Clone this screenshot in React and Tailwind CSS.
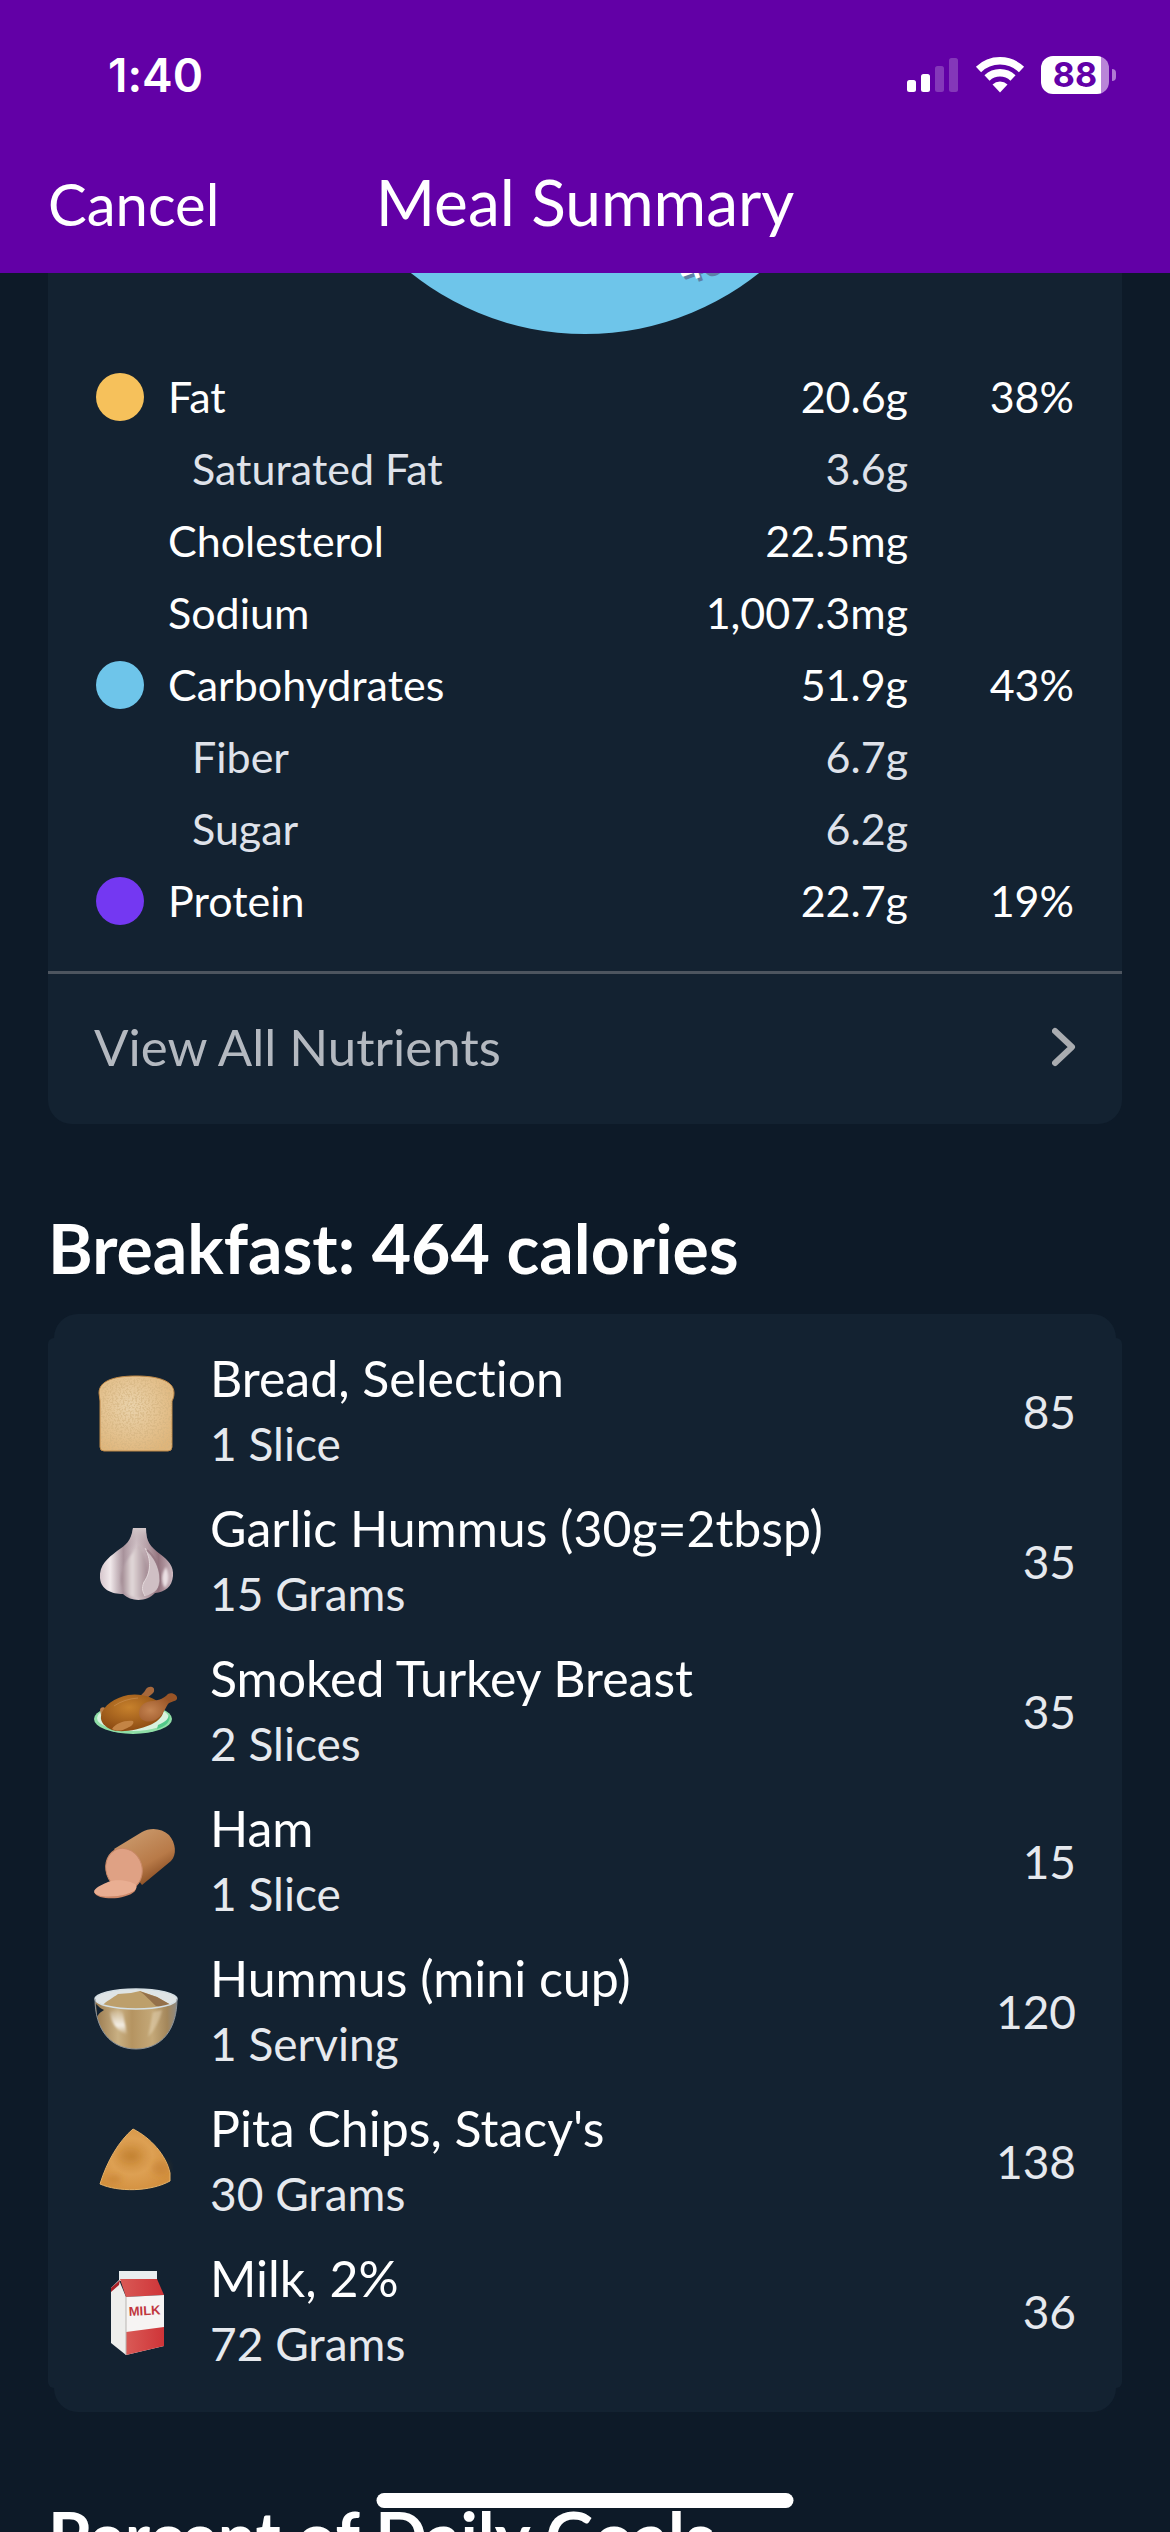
const nutrients = [
  { name: 'Fat', amount: '20.6g', percent: '38%', dot: 'bg-[#f6c15b]' },
  { name: 'Saturated Fat', amount: '3.6g', sub: true },
  { name: 'Cholesterol', amount: '22.5mg' },
  { name: 'Sodium', amount: '1,007.3mg' },
  { name: 'Carbohydrates', amount: '51.9g', percent: '43%', dot: 'bg-[#6ec5ea]' },
  { name: 'Fiber', amount: '6.7g', sub: true },
  { name: 'Sugar', amount: '6.2g', sub: true },
  { name: 'Protein', amount: '22.7g', percent: '19%', dot: 'bg-[#7438f2]' },
];

function BreadIcon() {
  return (
    <svg viewBox="0 0 84 84" className="size-[84px]" aria-hidden="true">
      <defs>
        <radialGradient id="bread" cx="0.42" cy="0.4" r="0.7">
          <stop offset="0" stopColor="#ead3ac" />
          <stop offset="1" stopColor="#dfb57a" />
        </radialGradient>
        <filter id="crumb" x="0" y="0" width="1" height="1">
          <feTurbulence type="fractalNoise" baseFrequency="0.55" numOctaves="2" seed="4" />
          <feColorMatrix values="0 0 0 0 0.66  0 0 0 0 0.46  0 0 0 0 0.22  0 0 0 5 -2.2" />
          <feComposite in2="SourceGraphic" operator="in" />
        </filter>
      </defs>
      <path d="M5 22C5 9 22 5 42 5S80 9 80 22c0 4-1 6-2 8v46q0 4-4 4H10q-4 0-4-4V30c0-3-1-5-1-8z" fill="url(#bread)" stroke="#bd8848" strokeWidth="1" />
      <path d="M7 22C7 10 22 7 42 7S78 10 78 22v54q0 3-4 3H10q-3 0-3-3z" filter="url(#crumb)" opacity="0.6" />
    </svg>
  );
}

function GarlicIcon() {
  return (
    <svg viewBox="0 -2 84 84" className="size-[84px]" aria-hidden="true">
      <defs>
        <linearGradient id="garlic">
          <stop offset="0" stopColor="#d6c6cc" />
          <stop offset="0.14" stopColor="#f1e9eb" />
          <stop offset="0.32" stopColor="#a8929b" />
          <stop offset="0.5" stopColor="#d8cbcf" />
          <stop offset="0.8" stopColor="#94747f" />
          <stop offset="1" stopColor="#cdbac1" />
        </linearGradient>
        <linearGradient id="clove">
          <stop offset="0" stopColor="#9d858e" />
          <stop offset="0.4" stopColor="#e3dada" />
          <stop offset="1" stopColor="#a08790" />
        </linearGradient>
        <linearGradient id="neck" x2="0" y2="1">
          <stop offset="0" stopColor="#d3c8ca" />
          <stop offset="1" stopColor="#a68d97" stopOpacity="0" />
        </linearGradient>
        <filter id="garlicSoft"><feGaussianBlur stdDeviation="1" /></filter>
      </defs>
      <path d="M39 5h13c0 14 4 18 14 26 8 6 14 12 13 22-1 11-8 16-18 17-8 9-24 9-32 1C18 71 7 67 6 55 5 42 14 35 23 28c9-6 14-10 16-23z" fill="url(#garlic)" />
      <path d="M45 22c-8 10-18 21-18 34 0 8 3 14 9 17 6 2 12 2 15 0 3-12 5-22 2-32-2-8-4-14-8-19z" fill="url(#clove)" filter="url(#garlicSoft)" />
      <path d="M51 25c8 15 4 27-1 34-3 7-1 10 1 14 8-2 14-6 15-15 0-13-6-24-15-33z" fill="#cfbfc4" />
      <path d="M51 25c8 15 4 27-1 34-3 7-1 10 1 14" fill="none" stroke="#e4d9db" strokeWidth="1" />
      <path d="M53 27c13 12 16 28 11 41" fill="none" stroke="#937580" strokeWidth="2" opacity="0.7" />
      <path d="M72 44c4 8 3 16-1 21-4-6-4-14 1-21z" fill="#eadfe3" filter="url(#garlicSoft)" />
      <path d="M39 5h13c0 12 3 16 8 22H28c7-5 10-12 11-22z" fill="url(#neck)" />
    </svg>
  );
}

function TurkeyIcon() {
  return (
    <svg viewBox="0 2 84 84" className="size-[84px]" aria-hidden="true">
      <defs>
        <radialGradient id="turkey" cx="0.45" cy="0.35" r="0.65">
          <stop offset="0" stopColor="#c7812c" />
          <stop offset="1" stopColor="#8c4b13" />
        </radialGradient>
        <radialGradient id="thigh" cx="0.3" cy="0.6" r="0.6">
          <stop offset="0" stopColor="#c48350" />
          <stop offset="1" stopColor="#985426" />
        </radialGradient>
      </defs>
      <ellipse cx="39" cy="50" rx="39" ry="15" fill="#8fdfa7" />
      <ellipse cx="39" cy="49" rx="36" ry="13" fill="#d8f2df" />
      <path d="M64 56c8-3 11-7 11-11 3 7-4 13-12 15z" fill="#52c98a" />
      <path d="M40 29c6-1 10-5 12-9 3-4 9-2 8 1 1 3-4 5-7 8l-6 7z" fill="#a6683c" />
      <path d="M6 41c0-3 4-4 6-1l1 7-6-1z" fill="#b97d49" />
      <path d="M7 47c2-11 14-18 27-21 13-2 26 2 34 10 5 7-2 16-12 20-12 5-28 8-38 5-7-3-12-8-11-14z" fill="url(#turkey)" />
      <path d="M45 44c0-8 7-12 14-12 7-1 11-3 15-7 4-2 10 1 9 5-2 3-6 2-9 5-4 7-7 14-15 17-7 2-14-1-14-8z" fill="url(#thigh)" />
      <path d="M18 60c4-6 13-9 21-8 2 3-3 6-8 8-4 2-9 2-13 0z" fill="#c38445" />
      <path d="M20 37q10-7 24-8" fill="none" stroke="#d39a5d" strokeWidth="1" opacity="0.5" />
    </svg>
  );
}

function HamIcon() {
  return (
    <svg viewBox="0 0 84 84" className="size-[84px]" aria-hidden="true">
      <defs>
        <linearGradient id="ham" x1="0.3" y1="0.1" x2="0.8" y2="0.9">
          <stop offset="0" stopColor="#c89668" />
          <stop offset="0.6" stopColor="#b87a48" />
          <stop offset="1" stopColor="#83481f" />
        </linearGradient>
      </defs>
      <path d="M20 28L48 11C56 6 68 7 75 14c7 8 8 20 2 26L48 64z" fill="url(#ham)" />
      <ellipse cx="30" cy="48" rx="18" ry="21" transform="rotate(-18 30 48)" fill="#dfa184" stroke="#c98967" strokeWidth="1" />
      <path d="M0 71c2 6 14 7 24 6 10-2 18-5 18-10z" fill="#cd8868" />
      <path d="M0 70c3-5 10-7 14-9 7-3 22-2 28 3 3 5-6 9-18 11-11 1-23 1-24-5z" fill="#e9ae92" />
    </svg>
  );
}

function BowlIcon() {
  return (
    <svg viewBox="0 -8 84 84" className="size-[84px]" aria-hidden="true">
      <defs>
        <linearGradient id="bowl">
          <stop offset="0" stopColor="#98784d" />
          <stop offset="0.28" stopColor="#c9b083" />
          <stop offset="0.45" stopColor="#b59461" />
          <stop offset="0.7" stopColor="#c4a878" />
          <stop offset="0.88" stopColor="#a3865a" />
          <stop offset="1" stopColor="#8d8a84" />
        </linearGradient>
        <linearGradient id="shine" x2="0" y2="1">
          <stop offset="0" stopColor="#fff" stopOpacity="0.1" />
          <stop offset="0.6" stopColor="#fff" stopOpacity="0.8" />
          <stop offset="1" stopColor="#fff" stopOpacity="0" />
        </linearGradient>
        <filter id="bowlSoft"><feGaussianBlur stdDeviation="1.2" /></filter>
      </defs>
      <path d="M1 20c0 30 15 50 41 50s41-20 41-50c-5 12-77 12-82 0z" fill="url(#bowl)" />
      <ellipse cx="42" cy="20" rx="41" ry="10" fill="#dfe4e5" />
      <path d="M8 27c4-5 11-8 16-12l13-1 9-2 17 6 14 8c-14 5-55 6-69 1z" fill="#bd9f6b" />
      <path d="M45 12l18 6 14 8c-8 3-12 2-15 1-6-5-10-11-17-15z" fill="#94704a" />
      <path d="M2 25c4 4 6 5 8 6-3 2-5 3-7 7z" fill="#132231" />
      <path d="M16 33c6-2 11-2 13 1l4 22c-10-4-16-12-17-23z" fill="url(#shine)" filter="url(#bowlSoft)" />
      <path d="M59 33l9-2c-2 10-8 21-14 27z" fill="#e7d7b8" opacity="0.5" filter="url(#bowlSoft)" />
      <ellipse cx="42" cy="20" rx="41" ry="10" fill="none" stroke="#d5dfe4" strokeWidth="1.5" />
      <path d="M1 20c0 30 15 50 41 50s41-20 41-50" fill="none" stroke="#8c9399" strokeWidth="1" />
    </svg>
  );
}

function ChipIcon() {
  return (
    <svg viewBox="0 3 84 84" className="size-[84px]" aria-hidden="true">
      <defs>
        <radialGradient id="chip" cx="0.45" cy="0.45" r="0.6">
          <stop offset="0" stopColor="#c98939" />
          <stop offset="0.5" stopColor="#dda053" />
          <stop offset="1" stopColor="#d3903f" />
        </radialGradient>
        <filter id="chipSoft" x="-50%" y="-50%" width="200%" height="200%"><feGaussianBlur stdDeviation="3" /></filter>
      </defs>
      <path d="M39 11c18 9 33 26 37 44v8C56 74 24 74 6 66 13 43 25 23 39 11z" fill="url(#chip)" stroke="#e6b268" strokeWidth="1" />
      <g fill="#b97428" filter="url(#chipSoft)">
        <ellipse cx="66" cy="50" rx="8" ry="7" opacity="0.4" />
        <ellipse cx="20" cy="61" rx="8" ry="4" opacity="0.4" />
        <ellipse cx="36" cy="38" rx="11" ry="7" opacity="0.25" />
      </g>
    </svg>
  );
}

function MilkIcon() {
  return (
    <svg viewBox="0 0 84 84" className="size-[84px]" aria-hidden="true">
      <defs>
        <linearGradient id="red">
          <stop offset="0" stopColor="#d95a56" />
          <stop offset="1" stopColor="#cf3438" />
        </linearGradient>
      </defs>
      <path d="M25 0h38v10H25z" fill="#e9edef" />
      <path d="M17 17l8-8 7 17v58L17 72z" fill="#eeeeec" />
      <path d="M17 17l9-8-1 5-8 7z" fill="#a61f26" />
      <path d="M26 8h37l7 16-38 2z" fill="url(#red)" />
      <path d="M32 26l38-2v51l-38 9z" fill="#f6f4f3" />
      <path d="M32 61l38-5v19l-38 9z" fill="url(#red)" />
      <path d="M32 26v58" stroke="#b9b5b2" strokeWidth="1" />
      <text x="35" y="45" fontFamily="Liberation Sans, sans-serif" fontWeight="700" fontSize="13" fill="#c0373e" transform="rotate(-3 35 45)">MILK</text>
    </svg>
  );
}

const foods = [
  { name: 'Bread, Selection', serving: '1 Slice', calories: 85, Icon: BreadIcon },
  { name: 'Garlic Hummus (30g=2tbsp)', serving: '15 Grams', calories: 35, Icon: GarlicIcon },
  { name: 'Smoked Turkey Breast', serving: '2 Slices', calories: 35, Icon: TurkeyIcon },
  { name: 'Ham', serving: '1 Slice', calories: 15, Icon: HamIcon },
  { name: 'Hummus (mini cup)', serving: '1 Serving', calories: 120, Icon: BowlIcon },
  { name: "Pita Chips, Stacy's", serving: '30 Grams', calories: 138, Icon: ChipIcon },
  { name: 'Milk, 2%', serving: '72 Grams', calories: 36, Icon: MilkIcon },
];

function StatusBar() {
  return (
    <div className="flex h-[150px] items-center justify-between pl-[108px] pr-[54px]">
      <span className="font-['Inter',sans-serif] text-[46px] font-semibold">1:40</span>
      <div className="flex items-center gap-4">
        <svg viewBox="0 0 52 38" className="h-[38px] w-[52px]" aria-hidden="true">
          <rect x="0" y="24" width="9" height="12" rx="2.5" fill="#fff" />
          <rect x="14" y="18" width="9" height="18" rx="2.5" fill="#fff" />
          <rect x="28" y="10" width="9" height="26" rx="2.5" fill="#fff" opacity="0.22" />
          <rect x="42" y="2" width="9" height="34" rx="2.5" fill="#fff" opacity="0.22" />
        </svg>
        <svg viewBox="0 0 50 38" className="h-[38px] w-[50px]" aria-hidden="true">
          <g fill="none" stroke="#fff" strokeWidth="7.5">
            <path d="M3.5 13.5a31 31 0 0 1 43 0" />
            <path d="M12 22a19 19 0 0 1 26 0" />
          </g>
          <path d="M25 36.5l-7.5-8a11 11 0 0 1 15 0z" fill="#fff" />
        </svg>
        <div className="flex items-center gap-[3px]">
          <div className="flex h-[38px] w-[68px] items-center justify-center rounded-xl bg-linear-to-r from-white from-88% to-[#b985d8] to-88%">
            <span className="font-['Inter',sans-serif] text-[34px] leading-none font-bold text-[#6200a8]">88</span>
          </div>
          <div className="h-3 w-1 rounded-r-full bg-[#b07ad3]" />
        </div>
      </div>
    </div>
  );
}

function Header() {
  return (
    <header className="h-[273px] shrink-0 bg-[#6200a6]">
      <StatusBar />
      <div className="grid grid-cols-[1fr_auto_1fr] items-baseline px-12 pt-4">
        <button type="button" className="justify-self-start text-[58px] leading-[72px]">Cancel</button>
        <h1 className="text-[64px] leading-[72px]">Meal Summary</h1>
      </div>
    </header>
  );
}

function NutrientCard() {
  return (
    <section className="rounded-b-3xl bg-[#132231]">
      {/* Lower edge of the macro pie, scrolled under the header */}
      <svg viewBox="0 0 1074 88" className="h-[88px] w-full" aria-hidden="true">
        <circle cx="537" cy="-218" r="279" fill="#6ec5ea" />
        <g fontFamily="Lato, sans-serif" fontWeight="900" fontSize="36">
          <text x="639" y="13" fill="#5d7fa6" transform="rotate(-20 639 13)">43</text>
          <text x="636" y="10" fill="#fff" transform="rotate(-20 636 10)">4</text>
        </g>
      </svg>
      <table className="w-full">
        <tbody>
          {nutrients.map(({ name, amount, percent, dot, sub }) => (
            <tr key={name} className={`h-[72px] text-[43px] leading-[48px] ${sub ? 'text-[#dfe2ea]' : ''}`}>
              <td className="w-[120px] pl-12">
                {dot && <div className={`size-12 rounded-full ${dot}`} />}
              </td>
              <th scope="row" className={`text-left font-normal ${sub ? 'pl-6' : ''}`}>{name}</th>
              <td className="text-right">{amount}</td>
              <td className="w-[214px] pr-12 text-right">{percent}</td>
            </tr>
          ))}
        </tbody>
      </table>
      <button
        type="button"
        className="mt-[34px] flex h-[153px] w-full items-center justify-between border-t-[3px] border-[#4d555f] pr-[46px] pb-1 pl-[46px] text-[51px] text-[#b4b9c0]"
      >
        View All Nutrients
        <svg viewBox="0 0 24 40" className="h-10 w-6" aria-hidden="true">
          <path d="M3 4l17 16L3 36" fill="none" stroke="#a9acb0" strokeWidth="6" strokeLinecap="round" strokeLinejoin="round" />
        </svg>
      </button>
    </section>
  );
}

function MealCard() {
  return (
    <section>
      <h2 className="mt-[82px] text-[68px] leading-[84px] font-bold">Breakfast: 464 calories</h2>
      <div className="mx-1.5 mt-6 h-6 rounded-t-3xl bg-[#132231]" />
      <ul className="rounded-md bg-[#132231] pr-[46px] pl-[46px]">
        {foods.map(({ name, serving, calories, Icon }) => (
          <li key={name} className="flex h-[150px] items-center">
            <Icon />
            <div className="ml-8 flex-1 pb-1">
              <p className="text-[50px] leading-[66px]">{name}</p>
              <p className="text-[46px] leading-[66px] text-[#e6e9ee]">{serving}</p>
            </div>
            <span className="pb-1 text-[46px] text-[#e6e9ee]">{calories}</span>
          </li>
        ))}
      </ul>
      <div className="mx-1.5 h-6 rounded-b-3xl bg-[#132231]" />
    </section>
  );
}

export default function App() {
  return (
    <div className="flex h-screen flex-col overflow-hidden bg-[#0d1a28] font-['Lato',sans-serif] text-white [font-variant-ligatures:none]">
      <Header />
      <main className="min-h-0 flex-1 overflow-hidden px-12">
        <NutrientCard />
        <MealCard />
        <h2 className="mt-[82px] text-[68px] leading-[84px] font-bold">Percent of Daily Goals</h2>
      </main>
      {/* Home indicator */}
      <div className="fixed bottom-6 left-1/2 h-[15px] w-[417px] -translate-x-1/2 rounded-full bg-white" />
    </div>
  );
}
